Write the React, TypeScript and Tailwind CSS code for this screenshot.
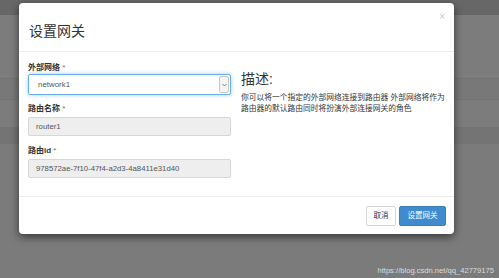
import React from "react";

const font = { fontFamily: '"Liberation Sans", "Noto Sans CJK SC", sans-serif' };

export default function App() {
  return (
    <div
      className="relative w-[499px] h-[278px] overflow-hidden bg-[#7a7a7a]"
      style={font}
    >
      {/* underlying page rows seen through the backdrop */}
      <div className="flex flex-col">
        <div className="h-[15px] bg-[#676767]" />
        <div className="h-[64px] bg-[#7c7c7c] border-b border-[#747474]" />
        <div className="h-[21px] bg-[#787878] border-b border-[#747474]" />
        <div className="h-[27px] bg-[#7c7c7c]" />
        <div className="h-[17px] bg-[#747474]" />
        <div className="h-[134px] bg-[#7b7b7b]" />
      </div>

      {/* modal */}
      <div className="absolute left-[19px] top-[3px] w-[435px] h-[231px] bg-white rounded-[4px] shadow-[0_3px_9px_rgba(0,0,0,0.55)] flex flex-col">
        <div className="relative h-[49px] border-b border-[#eeeeee] px-[10px] pt-[18px]">
          <div className="text-[14px] leading-[20px] text-[#333]">设置网关</div>
          <div className="absolute right-[9px] top-[8px] text-[10px] leading-[12px] text-[#c8c8c8]">×</div>
        </div>

        <div className="flex h-[144px] pl-[9px] pr-[4px]">
          <div className="w-[203px] shrink-0 flex flex-col">
            <div className="mt-[10px] text-[8px] leading-[11px] font-bold text-[#333]">
              外部网络 <span className="font-normal text-[#777]">*</span>
            </div>
            <div className="mt-[1px] h-[21px] rounded-[2px] border border-[#66afe9] shadow-[0_0_4px_rgba(102,175,233,0.6)] flex items-center">
              <div className="flex-1 pl-[9px] text-[7.9px] text-[#555]">network1</div>
              <div className="w-[10px] h-[17px] mr-[1px] border border-[#c8c8c8] rounded-[2px] bg-[#f4f4f4] flex items-center justify-center">
                <svg width="5" height="4" viewBox="0 0 5 4">
                  <path d="M0.5 1 L2.5 3 L4.5 1" fill="none" stroke="#666" strokeWidth="0.8" />
                </svg>
              </div>
            </div>

            <div className="mt-[8px] text-[8px] leading-[11px] font-bold text-[#333]">
              路由名称 <span className="font-normal text-[#777]">*</span>
            </div>
            <div className="mt-[3px] h-[19px] rounded-[2px] border border-[#d6d6d6] bg-[#eeeeee] flex items-center pl-[7px] text-[7.8px] text-[#555]">
              router1
            </div>

            <div className="mt-[9px] text-[8px] leading-[11px] font-bold text-[#333]">
              路由id <span className="font-normal text-[#777]">*</span>
            </div>
            <div className="mt-[3px] h-[19px] rounded-[2px] border border-[#d6d6d6] bg-[#eeeeee] flex items-center pl-[7px] text-[7.75px] text-[#555]">
              978572ae-7f10-47f4-a2d3-4a8411e31d40
            </div>
          </div>

          <div className="ml-[10px] flex-1 min-w-0 flex flex-col">
            <div className="mt-[18px] text-[14px] leading-[18px] text-[#333]">描述:</div>
            <div className="mt-[5px] text-[7.75px] leading-[10.5px] text-[#333]">
              你可以将一个指定的外部网络连接到路由器 外部网络将作为路由器的默认路由同时将扮演外部连接网关的角色
            </div>
          </div>
        </div>

        <div className="flex-1 border-t border-[#eeeeee] flex justify-end items-start pt-[9px] pr-[8px] gap-[3px]">
          <div className="w-[30px] h-[20px] rounded-[2px] border border-[#d6d6d6] bg-white flex items-center justify-center text-[7.5px] text-[#333]">
            取消
          </div>
          <div className="w-[47px] h-[20px] rounded-[2px] bg-[#3f8bcd] border border-[#3a80bd] flex items-center justify-center text-[7.5px] text-white">
            设置网关
          </div>
        </div>
      </div>

      <div className="absolute right-[5px] top-[265px] text-[7.6px] leading-[11px] text-[#dcdcdc]">
        https://blog.csdn.net/qq_42779175
      </div>
    </div>
  );
}
